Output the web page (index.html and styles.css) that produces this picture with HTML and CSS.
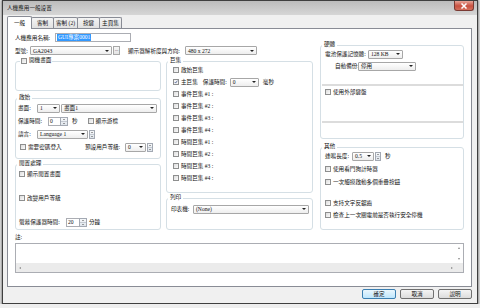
FILE: index.html
```html
<!DOCTYPE html>
<html>
<head>
  <meta charset="utf-8">
  <title>人機應用一般設置</title>
  <link rel="stylesheet" href="styles.css">
</head>
<body>

<div class="window">
  <div class="titlebar">
    <span class="title">人機應用一般設置</span>
    <span class="close-btn">
      <svg width="8" height="6" viewBox="0 0 8 6"><path d="M1.5 0.5 L6.5 5.5 M6.5 0.5 L1.5 5.5" stroke="#fff" stroke-width="1.5"/></svg>
    </span>
  </div>

  <!-- Tabs -->
  <div class="tabs">
    <div class="tab active">一般</div>
    <div class="tab">客制</div>
    <div class="tab wide">客制 (2)</div>
    <div class="tab">按鍵</div>
    <div class="tab">主頁集</div>
  </div>

  <div class="panel">
    <div class="top">
      <div class="main">
        <div class="row row-top">
          <span class="lbl w-name">人機應用名稱:</span>
          <span class="textbox name-box"><span class="selected">GUI專案0001</span></span>
        </div>
        <div class="row row-top row-model">
          <span class="lbl w-model">型號:</span>
          <span class="combo c-model">GA2043</span>
          <span class="dots">...</span>
          <span class="lbl w-res">顯示器解析度與方向:</span>
          <span class="combo c-res">480 x 272</span>
        </div>

        <div class="cols">
          <!-- Left column -->
          <div class="col col-left">
            <div class="group g-splash">
              <div class="legend legend-chk"><span class="chk"><span class="box"></span>開機畫面</span></div>
            </div>

            <div class="group g-start">
              <div class="legend">啟始</div>
              <div class="gbody">
                <div class="row">
                  <span class="lbl w19">畫面:</span>
                  <span class="combo c-scr-no">1</span>
                  <span class="combo c-scr-name">畫面1</span>
                </div>
                <div class="row">
                  <span class="lbl w30">保護時間:</span>
                  <span class="spin"><span class="field f12">0</span><span class="arrows"><i class="up"></i><i class="dn"></i></span></span>
                  <span class="unit">秒</span>
                  <span class="chk chk-cursor"><span class="box"></span>顯示游標</span>
                </div>
                <div class="row">
                  <span class="lbl w19">語言:</span>
                  <span class="combo c-lang">Language 1</span>
                  <span class="arrows solo"><i class="up"></i><i class="dn"></i></span>
                </div>
                <div class="row">
                  <span class="chk chk-pass"><span class="box"></span>需要密碼登入</span>
                  <span class="lbl w40">預設用戶等級:</span>
                  <span class="combo c-level">0</span>
                  <span class="arrows solo"><i class="up"></i><i class="dn"></i></span>
                </div>
              </div>
            </div>

            <div class="group g-idle">
              <div class="legend">閒置處理</div>
              <div class="gbody">
                <div class="row"><span class="chk"><span class="box"></span>顯示閒置畫面</span></div>
                <div class="row"><span class="chk"><span class="box"></span>改變用戶等級</span></div>
                <div class="row">
                  <span class="lbl w47">螢幕保護器時間:</span>
                  <span class="spin"><span class="field f13">20</span><span class="arrows"><i class="up"></i><i class="dn"></i></span></span>
                  <span class="unit u-min">分鐘</span>
                </div>
              </div>
            </div>
          </div>

          <!-- Middle column -->
          <div class="col col-mid">
            <div class="group g-macro">
              <div class="legend">巨集</div>
              <div class="gbody">
                <div class="row"><span class="chk"><span class="box"></span>啟始巨集</span></div>
                <div class="row">
                  <span class="chk"><span class="box on"><svg width="6" height="6" viewBox="0 0 6 6"><path d="M1 3 L2.5 4.6 L5 1" fill="none" stroke="#2b3f7a" stroke-width="1"/></svg></span>主巨集</span>
                  <span class="lbl w27 ml5">保護時間:</span>
                  <span class="combo c-ms">0</span>
                  <span class="unit">毫秒</span>
                </div>
                <div class="row"><span class="chk"><span class="box"></span>事件巨集 #1 :</span></div>
                <div class="row"><span class="chk"><span class="box"></span>事件巨集 #2 :</span></div>
                <div class="row"><span class="chk"><span class="box"></span>事件巨集 #3 :</span></div>
                <div class="row"><span class="chk"><span class="box"></span>事件巨集 #4 :</span></div>
                <div class="row"><span class="chk"><span class="box"></span>時間巨集 #1 :</span></div>
                <div class="row"><span class="chk"><span class="box"></span>時間巨集 #2 :</span></div>
                <div class="row"><span class="chk"><span class="box"></span>時間巨集 #3 :</span></div>
                <div class="row"><span class="chk"><span class="box"></span>時間巨集 #4 :</span></div>
              </div>
            </div>

            <div class="group g-print">
              <div class="legend">列印</div>
              <div class="gbody">
                <div class="row">
                  <span class="lbl w22">印表機:</span>
                  <span class="combo c-printer">(None)</span>
                </div>
              </div>
            </div>
          </div>
        </div>
      </div>

      <!-- Right column -->
      <div class="col col-right">
        <div class="group g-hw">
          <div class="legend">硬體</div>
          <div class="gbody">
            <div class="row">
              <span class="lbl w43">電池保護記憶體:</span>
              <span class="combo c-mem">128 KB</span>
            </div>
            <div class="row row-backup">
              <span class="lbl w23">自動備份:</span>
              <span class="combo c-backup">停用</span>
            </div>
            <div class="sep sep-1"></div>
            <div class="row row-kb"><span class="chk"><span class="box"></span>使用外部鍵盤</span></div>
            <div class="sep sep-2"></div>
          </div>
        </div>

        <div class="group g-misc">
          <div class="legend">其他</div>
          <div class="gbody">
            <div class="row">
              <span class="lbl w27">蜂鳴長度:</span>
              <span class="combo c-beep">0.5</span>
              <span class="arrows solo"><i class="up"></i><i class="dn"></i></span>
              <span class="unit">秒</span>
            </div>
            <div class="row m3"><span class="chk"><span class="box"></span>使用看門狗計時器</span></div>
            <div class="row m3"><span class="chk"><span class="box"></span>一次觸摸啟動多個重疊按鈕</span></div>
            <div class="row m11"><span class="chk"><span class="box"></span>支持文字反鋸齒</span></div>
            <div class="row m2"><span class="chk"><span class="box"></span>檢查上一次關電前是否執行安全停機</span></div>
          </div>
        </div>
      </div>
    </div>

    <!-- Notes -->
    <div class="row notes-lbl"><span class="lbl">註:</span></div>
    <div class="notes-box">
      <div class="notes-main">
        <div class="notes-text"></div>
        <div class="vscroll"><i class="tri t-up"></i><i class="tri t-dn"></i></div>
      </div>
      <div class="hscroll"><i class="tri t-lt"></i><i class="tri t-rt"></i></div>
    </div>
  </div>

  <div class="buttons">
    <div class="btn default">確定</div>
    <div class="btn">取消</div>
    <div class="btn">說明</div>
  </div>
</div>

</body>
</html>
```

FILE: styles.css
```css
/* Dialog window */
* {
  box-sizing: border-box;
}
body {
  margin: 0;
  background: #eeeeee;
  font-family: "Liberation Serif", "Noto Sans CJK TC", serif;
  font-size: 5.6px;
  color: #111;
}
.window {
  margin-left: 2px;
  width: 476px;
  height: 304px;
  padding: 0 5px 4px 4px;
  border: 1px solid #3f3f3f;
  background: #f0f0f0;
  box-shadow: 0 1px 2px 1px rgba(0, 0, 0, 0.4);
  display: flex;
  flex-direction: column;
}
.titlebar {
  height: 14px;
  margin: 0 -5px 0 -4px;
  padding-left: 4px;
  background: linear-gradient(#bcbcbc, #d6d6d6);
  display: flex;
  align-items: flex-start;
}
.title {
  line-height: 14px;
  color: #1a1a1a;
}
.close-btn {
  margin-left: auto;
  margin-right: 3px;
  width: 20px;
  height: 10px;
  border: 1px solid #7a3a33;
  border-top: none;
  border-radius: 0 0 3px 3px;
  background: linear-gradient(#e8a497, #c8503f 55%, #d5705d);
  display: flex;
  align-items: center;
  justify-content: center;
}

/* Tabs */
.tabs {
  display: flex;
  align-items: flex-end;
  height: 13px;
}
.tab {
  width: 23px;
  height: 11px;
  margin-left: -1px;
  border: 1px solid #898c95;
  border-bottom: none;
  border-radius: 2px 2px 0 0;
  background: linear-gradient(#f4f4f4, #e1e1e1);
  display: flex;
  align-items: center;
  justify-content: center;
  white-space: nowrap;
}
.tab.wide {
  width: 25px;
}
.tab.active {
  width: 25px;
  height: 13px;
  margin-left: 0;
  margin-bottom: -1px;
  background: #fff;
  position: relative;
  z-index: 1;
}

/* Tab panel */
.panel {
  height: 259px;
  border: 1px solid #898c95;
  background: #fff;
  padding: 4px 0 0 7px;
}
.top {
  display: flex;
}
.main {
  width: 298px;
}
.row {
  display: flex;
  align-items: center;
  height: 10px;
  white-space: nowrap;
}
.row-top {
  height: 9px;
}
.row-model {
  margin-top: 4px;
}
.lbl {
  display: inline-block;
  flex-shrink: 0;
  white-space: nowrap;
}
.w-name { width: 40px; }
.w-model { width: 15px; }
.w-res { width: 57px; margin-left: 8px; }
.w19 { width: 19px; }
.w22 { width: 22px; }
.w23 { width: 23px; }
.w27 { width: 27px; }
.w30 { width: 30px; }
.w40 { width: 40px; }
.w43 { width: 43px; }
.w47 { width: 47px; }
.ml5 { margin-left: 5px; }
.unit {
  margin-left: 4px;
}
.u-min {
  margin-left: 2px;
}

/* Inputs */
.textbox {
  height: 9px;
  border: 1px solid #abadb3;
  background: #fff;
  display: flex;
  align-items: center;
  padding-left: 1px;
}
.name-box {
  width: 76px;
}
.selected {
  background: #3399ff;
  color: #fff;
  line-height: 7px;
  padding: 0 1px;
}
.combo {
  height: 9px;
  flex-shrink: 0;
  border: 1px solid #a7a7a7;
  border-radius: 1px;
  background: linear-gradient(#ffffff, #eeeeee);
  display: flex;
  align-items: center;
  padding-left: 2px;
  overflow: hidden;
  white-space: nowrap;
}
.combo::after {
  content: "";
  margin-left: auto;
  margin-right: 2px;
  border-left: 2px solid transparent;
  border-right: 2px solid transparent;
  border-top: 2px solid #222;
}
.c-model { width: 82px; }
.c-res { width: 72px; }
.c-scr-no { width: 23px; }
.c-scr-name { width: 96px; margin-left: 1px; }
.c-lang { width: 51px; }
.c-level { width: 21px; }
.c-ms { width: 29px; }
.c-printer { width: 116px; }
.c-mem { width: 35px; }
.c-backup { width: 58px; }
.c-beep { width: 22px; }
.dots {
  width: 7px;
  height: 9px;
  margin-left: 1px;
  border: 1px solid #a7a7a7;
  background: linear-gradient(#f7f7f7, #e3e3e3);
  font-size: 5px;
  line-height: 5px;
  text-align: center;
}
.spin {
  display: flex;
}
.field {
  height: 9px;
  border: 1px solid #abadb3;
  border-right: none;
  background: #fff;
  padding-left: 1px;
  line-height: 7px;
}
.f12 { width: 12px; }
.f13 { width: 13px; }
.arrows {
  width: 8px;
  height: 9px;
  border: 1px solid #a3a9b3;
  background: linear-gradient(#f6f8fa, #dfe5ec);
  display: flex;
  flex-direction: column;
}
.arrows.solo {
  width: 6px;
  margin-left: 1px;
}
.arrows i {
  flex: 1;
  display: flex;
  align-items: center;
  justify-content: center;
}
.arrows .up {
  border-bottom: 1px solid #c3c9d1;
}
.arrows i::after {
  content: "";
  border-left: 1.5px solid transparent;
  border-right: 1.5px solid transparent;
}
.arrows .up::after {
  border-bottom: 1.5px solid #444;
}
.arrows .dn::after {
  border-top: 1.5px solid #444;
}

/* Checkboxes */
.chk {
  display: inline-flex;
  align-items: center;
  gap: 2px;
  white-space: nowrap;
}
.box {
  width: 6px;
  height: 6px;
  border: 1px solid #8e8f8f;
  background: linear-gradient(135deg, #dcdcdc, #fbfbfb);
  display: flex;
  align-items: center;
  justify-content: center;
}
.box.on {
  background: #f4f4f4;
}
.chk-cursor {
  margin-left: 10px;
}
.chk-pass {
  width: 65px;
  margin-left: 2px;
}

/* Group boxes */
.cols {
  display: flex;
  gap: 5px;
  margin-top: 6px;
}
.col-left { width: 146px; }
.col-mid { width: 147px; }
.col-right {
  width: 144px;
  margin-left: 7px;
}
.group {
  border: 1px solid #d5dfe5;
  border-radius: 3px;
}
.legend {
  width: fit-content;
  height: 9px;
  line-height: 9px;
  margin: -6px 0 0 1px;
  padding: 0 2px;
  background: #fff;
  display: flex;
  align-items: center;
  white-space: nowrap;
}
.legend-chk {
  margin-left: 4px;
  padding: 0 1px;
}
.gbody {
  display: flex;
  flex-direction: column;
}
.g-splash { height: 30px; }
.g-start { height: 61px; margin-top: 7px; }
.g-start .gbody { padding: 1px 0 0 2px; gap: 3px; }
.g-idle { height: 66px; margin-top: 5px; }
.g-idle .gbody { padding: 1px 0 0 3px; gap: 14px; }
.g-macro { height: 132px; }
.g-macro .gbody { padding-left: 6px; gap: 2px; }
.g-print { height: 32px; margin-top: 5px; }
.g-print .gbody { padding: 2px 0 0 4px; }
.g-hw { height: 94px; margin-top: 12px; }
.g-hw .gbody { padding-left: 4px; }
.row-backup { margin: 2px 0 0 10px; }
.sep {
  margin-left: -3px;
  border-top: 2px solid #dcdcdc;
}
.sep-1 { margin-top: 13px; }
.row-kb { margin-top: 1px; }
.sep-2 { margin-top: 24px; }
.g-misc { height: 83px; margin-top: 8px; }
.g-misc .gbody { padding-left: 4px; }
.m2 { margin-top: 2px; }
.m3 { margin-top: 3px; }
.m11 { margin-top: 11px; }

/* Notes */
.notes-lbl {
  height: 9px;
  margin-top: 2px;
}
.notes-box {
  width: 449px;
  height: 30px;
  margin-top: 2px;
  border: 1px solid #abadb3;
  display: flex;
  flex-direction: column;
}
.notes-main {
  flex: 1;
  display: flex;
}
.notes-text {
  flex: 1;
}
.vscroll {
  width: 9px;
  padding: 3px 0;
  display: flex;
  flex-direction: column;
  justify-content: space-between;
  align-items: center;
}
.hscroll {
  height: 9px;
  padding: 0 10px 0 3px;
  background: #ebebeb;
  display: flex;
  justify-content: space-between;
  align-items: center;
}
.tri {
  width: 0;
  height: 0;
  border: 1.5px solid transparent;
}
.t-up { border-bottom: 2px solid #8a8a8a; border-top-width: 0; }
.t-dn { border-top: 2px solid #8a8a8a; border-bottom-width: 0; }
.t-lt { border-right: 2px solid #8a8a8a; border-left-width: 0; }
.t-rt { border-left: 2px solid #8a8a8a; border-right-width: 0; }

/* Dialog buttons */
.buttons {
  display: flex;
  justify-content: flex-end;
  gap: 4px;
  height: 10px;
  margin-top: 2px;
}
.btn {
  width: 34px;
  height: 10px;
  border: 1px solid #707070;
  border-radius: 2px;
  background: linear-gradient(#f4f4f4, #dcdcdc);
  display: flex;
  align-items: center;
  justify-content: center;
}
.btn.default {
  border-color: #3c7fb1;
  background: linear-gradient(#eaf6fd, #bee6fd);
}
```
